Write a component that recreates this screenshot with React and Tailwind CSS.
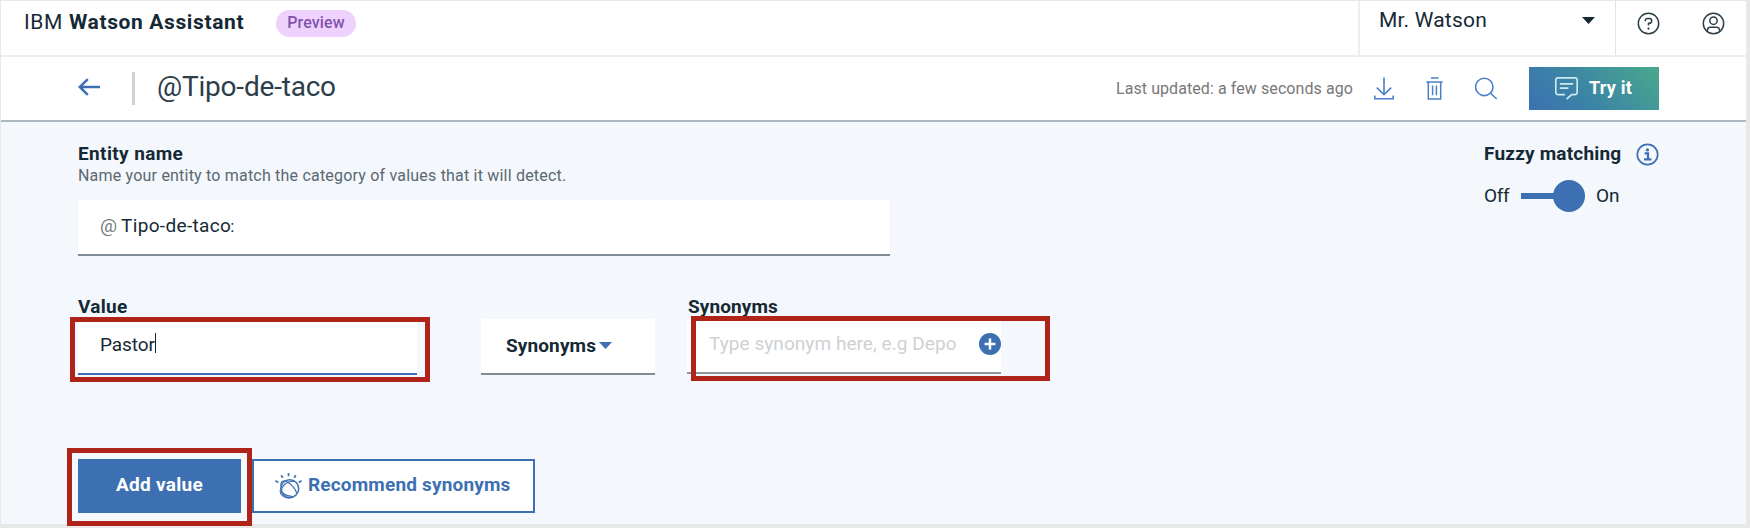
import React from "react";

const stroke = { fill: "none", stroke: "currentColor" };

function HelpIcon() {
  return (
    <svg className="h-[23px] w-[23px] shrink-0" viewBox="0 0 23 23" {...stroke} strokeWidth="1.5">
      <circle cx="11.5" cy="11.5" r="10.2" />
      <path d="M8.3 9.2V8.7a2.3 2.3 0 0 1 2.3-2.2h1.7a2.4 2.4 0 0 1 0 4.8h-.8v2.3" />
      <circle cx="11.5" cy="16.6" r="1.1" fill="currentColor" stroke="none" />
    </svg>
  );
}

function UserIcon() {
  return (
    <svg className="h-[23px] w-[23px] shrink-0" viewBox="0 0 23 23" {...stroke} strokeWidth="1.5">
      <circle cx="11.5" cy="11.5" r="10.2" />
      <circle cx="11.5" cy="8.7" r="3.7" />
      <path d="M5.4 19.4v-1.2a3 3 0 0 1 3-3h6.2a3 3 0 0 1 3 3v1.2" />
    </svg>
  );
}

function BackIcon() {
  return (
    <svg className="h-[18px] w-[22px] shrink-0" viewBox="0 0 22 18" {...stroke} strokeWidth="2.5">
      <path d="M22 9H2M9.8 1.2 1.8 9l8 7.8" />
    </svg>
  );
}

function DownloadIcon() {
  return (
    <svg className="h-[23px] w-5 shrink-0" viewBox="0 0 20 23" {...stroke} strokeWidth="1.6">
      <path d="M10 .5v16.8M2.8 10.6l7.2 7 7.2-7M.8 18.6v3.2h18.4v-3.2" />
    </svg>
  );
}

function TrashIcon() {
  return (
    <svg className="h-[23px] w-[17px] shrink-0" viewBox="0 0 17 23" {...stroke} strokeWidth="1.5">
      <path d="M5 1.1h7.6M.3 5h16.4M2.3 5v16.9h12.4V5M6.6 8.4v9.8M10.4 8.4v9.8" />
    </svg>
  );
}

function SearchIcon() {
  return (
    <svg className="h-[23px] w-[23px] shrink-0" viewBox="0 0 23 23" {...stroke} strokeWidth="1.6">
      <circle cx="9.3" cy="9.9" r="8.7" />
      <path d="m15.3 16 6.4 6" />
    </svg>
  );
}

function ChatIcon() {
  return (
    <svg className="h-[23px] w-[23px] shrink-0" viewBox="0 0 23 23" {...stroke} strokeWidth="1.7">
      <path d="M10 17.6H3a2.2 2.2 0 0 1-2.2-2.2V3A2.2 2.2 0 0 1 3 .9h17A2.2 2.2 0 0 1 22.2 3v12.4a2.2 2.2 0 0 1-2.2 2.2h-3.4l-5 4.5M4.8 6.8h13.4M4.8 11.2h8.6" />
    </svg>
  );
}

function InfoIcon() {
  return (
    <svg className="h-[23px] w-[23px] shrink-0" viewBox="0 0 23 23" {...stroke} strokeWidth="1.7">
      <circle cx="11.5" cy="11.5" r="10.2" />
      <circle cx="11.5" cy="6.9" r="1.6" fill="currentColor" stroke="none" />
      <path d="M8.7 10.3h3.3v5.9M8 16.3h7.4" strokeWidth="2.2" />
    </svg>
  );
}

function WatsonIcon() {
  return (
    <svg className="h-[27px] w-[27px] shrink-0" viewBox="0 0 27 27" {...stroke} strokeWidth="1.5">
      <circle cx="14.7" cy="15.7" r="9" />
      <path d="M6 12.7C5.300 8.300 8.500 7 12 8.700c4.200 2.100 8.600 7 9.700 11.500M20.200 8.600C14 7 6.800 12 6.600 17c0 3.500 4 5.600 11 6.700M5 17.500c.2 4.700 4 7.500 9.300 7.600" strokeWidth="1.2" />
      <path d="M13.5 0v3.300M6.200 2.200 7.800 4.800M20.800 2.200l-1.600 2.600M.4 7.700l2.900 1.700M26.600 7.700l-2.900 1.700" strokeWidth="1.7" />
    </svg>
  );
}

function PlusIcon() {
  return (
    <svg className="h-[22px] w-[22px] shrink-0" viewBox="0 0 22 22">
      <circle cx="11" cy="11" r="11" fill="#3d70b2" />
      <path d="M11 5.6v10.8M5.6 11h10.8" stroke="#fff" strokeWidth="2.4" />
    </svg>
  );
}

function Caret({ className }) {
  return (
    <svg className={className} viewBox="0 0 13 7" preserveAspectRatio="none">
      <path d="M0 0h13L6.5 7z" fill="currentColor" />
    </svg>
  );
}

function Header() {
  return (
    <header className="flex h-14 shrink-0 border-b-2 border-[#eceff0] bg-white">
      <div className="flex grow pl-[23px] pt-[9px]">
        <div className="flex gap-[6px] text-[21px]">
          <span className="tracking-[0.6px]">IBM</span>
          <span className="font-bold tracking-[0.62px]">Watson Assistant</span>
        </div>
        <div className="ml-[32px] h-[27px] rounded-full bg-[#eed2fd] px-[11px] pt-px text-[16px] font-medium tracking-[0.15px] text-[#8152ab]">Preview</div>
      </div>
      <div className="flex w-[257px] justify-between border-l-2 border-[#eceff0] pl-[19px] pr-[20px] pt-[7px] text-[21px]">
        <span className="tracking-[0.2px]">Mr. Watson</span>
        <Caret className="mt-[9px] h-[7px] w-[13px]" />
      </div>
      <div className="flex w-[131px] gap-[42px] border-l border-[#dfe3e6] pl-[21px] pt-[11px] text-[#2c3e49]">
        <HelpIcon />
        <UserIcon />
      </div>
    </header>
  );
}

function Toolbar() {
  return (
    <div className="flex h-[65px] shrink-0 items-center border-b-2 border-[#adb8c0] bg-white pl-[77px] pr-[87px]">
      <span className="-mt-[3px] flex text-[#3d70b2]"><BackIcon /></span>
      <div className="ml-8 h-[33px] w-[3px] bg-[#ccd3d8]" />
      <h1 className="-mt-[3px] ml-[22px] text-[28px] font-normal tracking-[-0.2px] text-[#2c3e49]">@Tipo-de-taco</h1>
      <div className="ml-auto flex items-center">
        <span className="mr-[21px] text-[16px] tracking-[0.08px] text-[#777]">Last updated: a few seconds ago</span>
        <div className="flex items-center text-[#4a80c8]">
          <DownloadIcon />
          <span className="ml-8 flex"><TrashIcon /></span>
          <span className="ml-8 flex"><SearchIcon /></span>
        </div>
        <button className="ml-[31px] flex h-[43px] w-[130px] items-center bg-linear-[45deg] from-[#3d70b2] via-[#3b84a6] via-40% to-[#49a98c] pl-[26px] text-white">
          <span className="flex text-[#cdeaf0]"><ChatIcon /></span>
          <span className="-mt-[2px] ml-[11px] text-[18px] font-bold tracking-[0.22px]">Try it</span>
        </button>
      </div>
    </div>
  );
}

function EntitySection() {
  return (
    <section className="flex justify-between">
      <div className="w-[812px]">
        <h2 className="h-[22px] text-[19px] font-bold tracking-[0.38px]">Entity name</h2>
        <p className="h-9 text-[16px] tracking-[0.2px] text-[#5a6872]">Name your entity to match the category of values that it will detect.</p>
        <div className="flex h-[56px] border-b-2 border-[#7f8c95] bg-white pl-[22px] pt-[14px] text-[19px]">
          <span className="w-[21px] text-[#777e7a]">@</span>
          <span className="tracking-[0.35px]">Tipo-de-taco</span>
          <span className="-ml-px text-[17px]">:</span>
        </div>
      </div>
      <div className="w-[175px]">
        <div className="flex justify-between">
          <span className="text-[19px] font-bold tracking-[0.2px]">Fuzzy matching</span>
          <span className="flex pt-px text-[#3d70b2]"><InfoIcon /></span>
        </div>
        <div className="mt-[14px] flex h-8 items-center text-[19px]">
          <span className="w-[37px] tracking-[-0.3px]">Off</span>
          <div className="-mr-px h-[6px] w-[33px] bg-[#3d70b2]" />
          <div className="h-8 w-8 rounded-full bg-[#3d70b2]" />
          <span className="ml-[11px]">On</span>
        </div>
      </div>
    </section>
  );
}

function ValueRow() {
  return (
    <section className="mt-[39px] flex h-[80px] text-[19px]">
      <div className="w-[339px]">
        <h2 className="font-bold tracking-[0.3px]">Value</h2>
        <div className="flex h-[56px] border-b-2 border-[#3d70b2] bg-white pl-[22px] pt-[14px]">
          <span className="tracking-[-0.1px]">Pastor</span>
          <span className="h-5 w-px bg-[#152935]" />
        </div>
      </div>
      <button className="ml-16 mt-6 flex h-[56px] w-[174px] border-b-2 border-[#7f8c95] bg-white pl-[25px] pt-[15px] font-bold tracking-[0.12px]">
        Synonyms
        <span className="flex pl-[3px] pt-[8px] text-[#3d70b2]"><Caret className="h-[7px] w-[13px]" /></span>
      </button>
      <div className="ml-[33px] w-[313px]">
        <h2 className="font-bold tracking-[0.1px]">Synonyms</h2>
        <div className="-ml-px flex h-[55px] justify-between border-b-2 border-[#8c979f] bg-white pl-[22px] pt-[13px]">
          <span className="tracking-[0.06px] text-[#cdd1d4]">Type synonym here, e.g Depo</span>
          <span className="flex pt-px"><PlusIcon /></span>
        </div>
      </div>
    </section>
  );
}

function Actions() {
  return (
    <section className="mt-[84px] flex h-[54px] text-[19px] font-bold">
      <button className="flex w-[163px] justify-center bg-[#3d70b2] pt-[14px] tracking-[0.28px] text-white">Add value</button>
      <button className="ml-[11px] flex w-[283px] border-2 border-[#3d70b2] bg-white pl-[21px] pt-3 text-[#3d70b2]">
        <WatsonIcon />
        <span className="ml-[6px] tracking-[0.17px]">Recommend synonyms</span>
      </button>
    </section>
  );
}

export default function App() {
  return (
    <div className="relative flex h-[528px] w-[1750px] flex-col border-b-4 border-l border-r-4 border-t border-[#e8e8e8] bg-[#f4f7fb] font-['Roboto','Liberation_Sans',sans-serif] leading-6 text-[#152935]">
      <Header />
      <Toolbar />
      <main className="pl-[77px] pr-[87px] pt-5">
        <EntitySection />
        <ValueRow />
        <Actions />
      </main>
      <div className="absolute left-[69px] top-[316px] h-[65px] w-[360px] border-[5px] border-[#b02318]" />
      <div className="absolute left-[690px] top-[315px] h-[65px] w-[359px] border-[5px] border-[#b02318]" />
      <div className="absolute left-[66px] top-[447px] h-[78px] w-[185px] border-[5px] border-[#b02318]" />
    </div>
  );
}
